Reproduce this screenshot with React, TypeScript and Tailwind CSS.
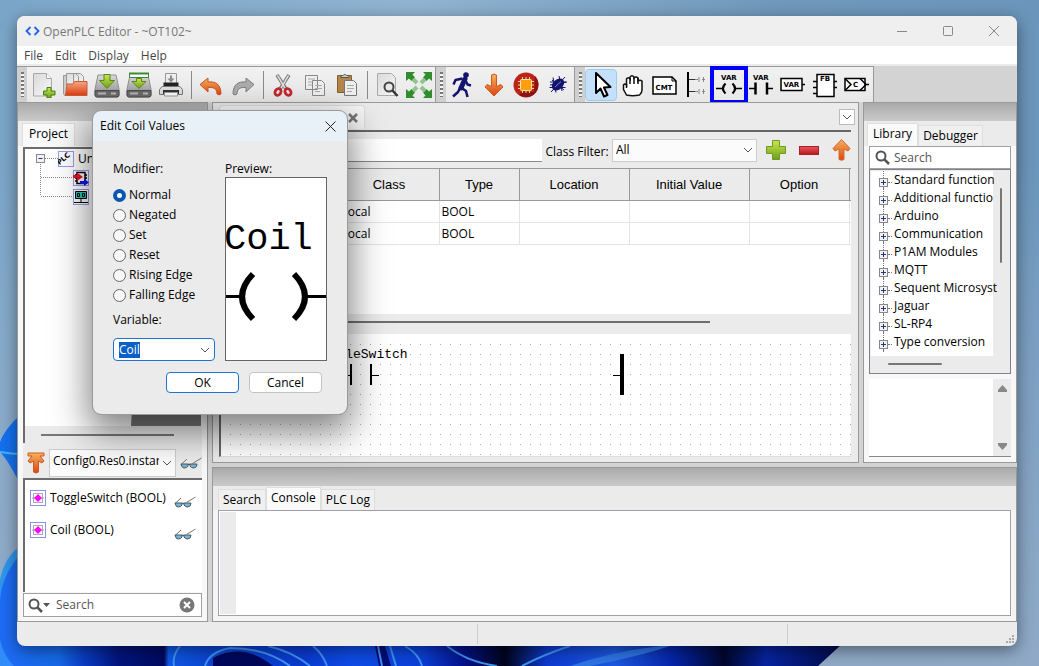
import { useEffect, useRef, useState, type ReactNode } from "react";

const Svg = ({ w, h, vb, children, className }: { w: number; h: number; vb?: string; children: ReactNode; className?: string }) => (
  <svg width={w} height={h} viewBox={vb ?? `0 0 ${w} ${h}`} className={className ?? "shrink-0"} fill="none" aria-hidden="true">
    {children}
  </svg>
);

const Defs = () => (
  <svg width="0" height="0" className="absolute" aria-hidden="true">
    <defs>
      <linearGradient id="orange" x1="0" y1="0" x2="0" y2="1">
        <stop offset="0" stopColor="#f6b35c" />
        <stop offset="1" stopColor="#dd4414" />
      </linearGradient>
      <linearGradient id="lime" x1="0" y1="0" x2="0" y2="1">
        <stop offset="0" stopColor="#c9e64c" />
        <stop offset="1" stopColor="#6f9f1c" />
      </linearGradient>
      <linearGradient id="steel" x1="0" y1="0" x2="0" y2="1">
        <stop offset="0" stopColor="#dadada" />
        <stop offset="1" stopColor="#8a8a8a" />
      </linearGradient>
      <linearGradient id="paper" x1="0" y1="0" x2="1" y2="1">
        <stop offset="0" stopColor="#d9d9d9" />
        <stop offset="1" stopColor="#f8f8f8" />
      </linearGradient>
      <linearGradient id="folder" x1="0" y1="0" x2="0" y2="1">
        <stop offset="0" stopColor="#f7a884" />
        <stop offset="1" stopColor="#d93c12" />
      </linearGradient>
      <linearGradient id="redbar" x1="0" y1="0" x2="0" y2="1">
        <stop offset="0" stopColor="#e8585a" />
        <stop offset="1" stopColor="#b81722" />
      </linearGradient>
    </defs>
  </svg>
);

const NewIcon = () => (
  <Svg w={26} h={26}>
    <path d="M3.5 1.5h13l5 5v17.500h-18z" fill="url(#paper)" stroke="#a8a8a8" />
    <path d="M16.500 1.500v5h5" fill="#fff" stroke="#a8a8a8" />
    <path d="M17 15.500h4v3.500h4v4h-4v3h-4v-3h-3.500v-4H17z" fill="url(#lime)" stroke="#3f7f12" />
  </Svg>
);
const OpenIcon = () => (
  <Svg w={26} h={26}>
    <path d="M1.500 3.500h5v20h-4l-1-2z" fill="#ccc" stroke="#999" />
    <path d="M4.500 1.500h9l3 3v8h-12zM11.500 1.500h7l3 3v8h-10z" fill="url(#paper)" stroke="#999" />
    <path d="M5 12h6l1.500-2.500H25V23.500H3.500z" fill="url(#folder)" stroke="#cc5a34" />
  </Svg>
);
const Drive = ({ banner }: { banner?: boolean }) => (
  <Svg w={26} h={26}>
    <path d="M4 3h18l3 14v6a2 2 0 0 1-2 2H3a2 2 0 0 1-2-2v-6z" fill="url(#steel)" stroke="#909090" />
    <path d="M1 18.500h24v4.500a2 2 0 0 1-2 2H3a2 2 0 0 1-2-2z" fill="#6a6a6a" stroke="#4c4c4c" />
    <path d="M4 21.500h8M17 21.500h5" stroke="#b5b5b5" strokeWidth="2" />
    {banner && <path d="M3.500 1.500h19v4h-19z" fill="#fff" stroke="#3e8a34" />}
    {banner && <path d="M3 1.500h20" stroke="#3e8a34" strokeWidth="2" />}
    <path d={banner ? "M10.500 6.500h5v3h4.500l-7 7-7-7h4.500z" : "M10 2.500h6v6h4.500L13 16.500 5.500 8.500H10z"} fill="url(#lime)" stroke="#568a16" />
  </Svg>
);
const PrintIcon = () => (
  <Svg w={26} h={26}>
    <path d="M7.500 1.500h11v10h-11z" fill="#eee" stroke="#999" />
    <path d="M12 3.500h2v3h2.500L13 10.500 9.500 6.500H12z" fill="#8a8a8a" />
    <path d="M5.500 10.500h15v5h-15z" fill="#222" />
    <path d="M4 14.500h18l2.500 3v5H1.500v-5z" fill="#ddd" stroke="#777" />
    <path d="M5 18h16v4H5z" fill="#333" />
    <path d="M6.500 20.500h13v3.500h-13z" fill="#f7f7f7" stroke="#999" />
  </Svg>
);
const UndoIcon = () => (
  <Svg w={26} h={26}>
    <path d="M2 12.500 10 6v4c8-1 13 3 13 12-1 1-3 1-4 0 0-5-3-7-9-6.500V20z" fill="url(#orange)" stroke="#c9561e" strokeLinejoin="round" />
  </Svg>
);
const RedoIcon = () => (
  <Svg w={26} h={26}>
    <path d="M24 12.500 16 6v4C8 9 3 13 3 22c1 1 3 1 4 0 0-5 3-7 9-6.500V20z" fill="#ababab" stroke="#7f7f7f" strokeLinejoin="round" />
  </Svg>
);
const CutIcon = () => (
  <Svg w={26} h={26}>
    <path d="M7 3 16 17M19 3 10 17" stroke="#777" strokeWidth="3.500" />
    <path d="M7.500 3.500 15 16M18.500 3.500 11 16" stroke="#ddd" strokeWidth="1.500" />
    <ellipse cx="8" cy="20" rx="2.800" ry="3.500" transform="rotate(35 8 20)" stroke="#c3282e" strokeWidth="2.800" />
    <ellipse cx="18" cy="20" rx="2.800" ry="3.500" transform="rotate(-35 18 20)" stroke="#c3282e" strokeWidth="2.800" />
  </Svg>
);
const CopyIcon = () => (
  <Svg w={26} h={26}>
    <path d="M3.500 3.500h12v14h-12zM10.500 8.500h9l3 3v12h-12z" fill="#efefef" stroke="#888" />
    <path d="M6 7h7M6 10h4M6 13h4M13 13.500h7M13 16.500h7M13 19.500h5" stroke="#aaa" />
  </Svg>
);
const PasteIcon = () => (
  <Svg w={26} h={26}>
    <path d="M3.500 3.500h14v17h-14z" fill="#b5864a" stroke="#82602f" />
    <path d="M7 5.500V3.500h2a2 2 0 0 1 3.500 0H15v2z" fill="#ccc" stroke="#555" />
    <path d="M10.500 8.500h9l3 3v12h-12z" fill="#efefef" stroke="#777" />
    <path d="M13 13.500h7M13 16.500h7M13 19.500h5" stroke="#aaa" />
  </Svg>
);
const PreviewIcon = () => (
  <Svg w={26} h={26}>
    <path d="M3.500 1.500h14l4 4v18h-18z" fill="url(#paper)" stroke="#aaa" />
    <circle cx="15" cy="15" r="4.500" fill="#e9e9e9" stroke="#444" strokeWidth="2" />
    <path d="m18.500 18.500 5 5.500" stroke="#333" strokeWidth="2.500" />
  </Svg>
);
const ExpandIcon = () => (
  <Svg w={26} h={26}>
    <g fill="#2f8d2c">
      <path d="M0 0h9L6.500 2.500l2.500 3-3.500 3.500L3 6.500 0 9z" />
      <path d="M26 0h-9l2.500 2.500-2.500 3 3.500 3.500L23 6.500 26 9z" />
      <path d="M0 26h9l-2.500-2.500 2.500-3L5.500 17 3 19.500 0 17z" />
      <path d="M26 26h-9l2.500-2.500-2.500-3 3.500-3.500 2.500 2.500L26 17z" />
    </g>
    <path d="m7 7 4 4M19 7l-4 4M7 19l4-4M19 19l-4-4" stroke="#93c48f" strokeWidth="4" />
  </Svg>
);
const RunIcon = () => (
  <Svg w={26} h={26}>
    <circle cx="17" cy="3" r="2.800" fill="#14146e" />
    <path d="M16 7 12 16" stroke="#14146e" strokeWidth="5" strokeLinecap="round" />
    <path d="M13.500 6.500 6.500 8 4.500 12.500M16 7.500 18.500 12.500 22 13.500M12 15.500l5 3.500 1.500 6M11 16 9 20 4 24.500" stroke="#14146e" strokeWidth="2.500" strokeLinejoin="round" />
  </Svg>
);
const DownArrow = () => (
  <Svg w={26} h={26}>
    <path d="M10.500 3q2.500-2 5 0v11.500l4.500-2 2 2.500-9 9-9-9 2-2.500 4.500 2z" fill="url(#orange)" stroke="#cf5a1c" strokeLinejoin="round" />
  </Svg>
);
const ChipIcon = () => (
  <Svg w={26} h={26}>
    <circle cx="13" cy="13" r="12.500" fill="#bd2418" />
    <path d="M22 4a12.500 12.500 0 0 1-16 19l3-3h12z" fill="#8e150f" />
    <path d="M9.500 5v16M13 5v16M16.500 5v16M5 9.500h16M5 13h16M5 16.500h16" stroke="#f1d0a0" />
    <rect x="7.500" y="7.500" width="11" height="11" rx="1" fill="#ff9f0f" stroke="#ffe2a8" />
  </Svg>
);
const BugIcon = () => (
  <Svg w={26} h={26}>
    <path d="M5 10h16M4.500 15.500h16M8 5.500l3 15M14 4l3 15M7 8l12 10M20 5 6 20M5 13l17-3" stroke="#14146e" />
    <ellipse cx="13" cy="12.500" rx="7" ry="5" transform="rotate(-42 13 12.500)" fill="#14146e" />
    <path d="m10 15 6-5.500" stroke="#7f82c8" />
  </Svg>
);
const CursorIcon = () => (
  <Svg w={26} h={26}>
    <path d="M8 1v20l4.500-4.500 3.500 8 3.500-1.500-3.500-7.500 6.500-.5z" fill="#fff" stroke="#000" strokeWidth="2" strokeLinejoin="round" />
  </Svg>
);
const HandIcon = () => (
  <Svg w={26} h={26}>
    <path d="M6.500 23 3.500 17.500V13q1.500-2 3 0V7q1.500-2.500 3.500 0V5q2-2.500 4 0v1q2-2 4 0v3q2-1.500 4 0v9q0 3-2.500 5-7 1.500-13 0z" fill="#fff" stroke="#111" strokeWidth="1.500" />
    <path d="M6.500 12v4M10 6v6M14 5v7M18 6v6" stroke="#111" strokeWidth="1.500" />
  </Svg>
);
const glyph = "font-['DejaVu_Sans'] font-bold";
const CmtIcon = () => (
  <Svg w={26} h={26}>
    <path d="M1 5h19l4 4v13H1z" fill="#fff" stroke="#000" strokeWidth="1.500" />
    <path d="M20 5v4h4" stroke="#000" />
    <text x="3.500" y="18" fontSize="7" fill="#000" className={glyph}>CMT</text>
  </Svg>
);
const RailIcon = () => (
  <Svg w={26} h={26}>
    <path d="M4 0v25" stroke="#000" strokeWidth="2" />
    <path d="M5 7.500h6M5 19.500h6" stroke="#333" />
    <path d="M11 7.500h3m4 0h3M11 19.500h3m4 0h3M15 5v5M19.500 5v5M15 17v5M19.500 17v5" stroke="#888" />
  </Svg>
);
const CoilIcon = () => (
  <Svg w={26} h={26}>
    <text x="5" y="8" fontSize="7" fill="#000" className={glyph}>VAR</text>
    <path d="M0 16.500h6M20 16.500h6" stroke="#000" strokeWidth="1.500" />
    <path d="M9.500 11.500q-5 5 0 10M16.500 11.500q5 5 0 10" stroke="#000" strokeWidth="2.200" />
  </Svg>
);
const ContactIcon = () => (
  <Svg w={26} h={26}>
    <text x="5" y="8" fontSize="7" fill="#000" className={glyph}>VAR</text>
    <path d="M1 16.500h6M19 16.500h6" stroke="#000" strokeWidth="1.500" />
    <path d="M7.500 10.500v12M19 10.500v12" stroke="#000" strokeWidth="2.500" />
  </Svg>
);
const VarIcon = () => (
  <Svg w={26} h={26}>
    <path d="M1 6.500h21v12H1z" fill="#fff" stroke="#000" strokeWidth="1.500" />
    <path d="M22 12.500h3" stroke="#000" strokeWidth="1.500" />
    <text x="3.500" y="15" fontSize="7" fill="#000" className={glyph}>VAR</text>
  </Svg>
);
const FbIcon = () => (
  <Svg w={26} h={26}>
    <path d="M5 2.500h17v22H5z" fill="#fff" stroke="#000" strokeWidth="1.500" />
    <path d="M1 9.500h4M1 15.500h4M1 21.500h4M22 9.500h3M22 15.500h3" stroke="#000" strokeWidth="1.500" />
    <text x="8" y="9" fontSize="7" fill="#000" className={glyph}>FB</text>
  </Svg>
);
const ConnIcon = () => (
  <Svg w={26} h={26}>
    <path d="M1 6.500h20v12H1z" fill="#fff" stroke="#000" strokeWidth="1.500" />
    <path d="m1 6.500 6 6-6 6M16 6.500l6 6-6 6M22 12.500h3" stroke="#000" strokeWidth="1.500" />
    <text x="9" y="15" fontSize="7" fill="#000" className={glyph}>C</text>
  </Svg>
);

const Chevron = () => (
  <Svg w={10} h={6}>
    <path d="m1 1 4 4 4-4" stroke="#555" />
  </Svg>
);
const Glasses = () => (
  <Svg w={22} h={12}>
    <path d="M1 7.500 7 2M12.500 6.500 21.500 1" stroke="#777" />
    <path d="M1 7h7v2q-1 2-4 2Q1.500 10.500 1 7zM10 7h7q0 3.500-3 4-3 0-4-2z" fill="#6cb8e2" stroke="#555" />
    <path d="M8 7.500q1-1 2 0" stroke="#444" />
  </Svg>
);
const Magnifier = () => (
  <Svg w={15} h={15}>
    <circle cx="6" cy="6" r="4.500" stroke="#555" strokeWidth="2" />
    <path d="m9.500 9.500 4.500 4.500" stroke="#555" strokeWidth="2.500" />
  </Svg>
);
const VarMark = () => (
  <Svg w={16} h={16}>
    <rect x=".5" y=".5" width="15" height="15" fill="#fff" stroke="#8f8fee" />
    <path d="M3.500 3v10M12.500 3v10M3 3.500h10M3 12.500h10M5 8H2m9 0h3" stroke="#aaa" />
    <path d="m8 4 4 4-4 4-4-4z" fill="#f0f" />
  </Svg>
);
const PlusBox = () => (
  <Svg w={9} h={9}>
    <rect x=".5" y=".5" width="8" height="8" fill="#f2f2f2" stroke="#888" />
    <path d="M4.500 2v5M2 4.500h5" stroke="#23357c" />
  </Svg>
);

function Wallpaper() {
  return (
    <svg className="absolute inset-0 h-full w-full" viewBox="0 0 1039 666" preserveAspectRatio="none" aria-hidden="true">
      <defs>
        <linearGradient id="sky" x1="0" y1="0" x2="1" y2="0">
          <stop offset="0" stopColor="#7ba5c8" />
          <stop offset=".4" stopColor="#90b4d1" />
          <stop offset=".75" stopColor="#7098bb" />
          <stop offset="1" stopColor="#6b95bb" />
        </linearGradient>
        <linearGradient id="haze" x1="0" y1="0" x2="0" y2="1">
          <stop offset=".25" stopColor="#a3b8d0" stopOpacity="0" />
          <stop offset="1" stopColor="#93abc8" stopOpacity=".9" />
        </linearGradient>
        <linearGradient id="bloom" x1="0" y1="0" x2="1" y2="0">
          <stop offset="0" stopColor="#1d6bf5" />
          <stop offset=".07" stopColor="#1668e6" />
          <stop offset=".1" stopColor="#0a3cc0" />
          <stop offset=".14" stopColor="#021580" />
          <stop offset=".195" stopColor="#010a60" />
          <stop offset=".2" stopColor="#0f58e4" />
          <stop offset=".25" stopColor="#0b45d0" />
          <stop offset=".36" stopColor="#0a3ad0" />
          <stop offset=".42" stopColor="#0e4ce6" />
          <stop offset=".5" stopColor="#0c40d8" />
          <stop offset=".55" stopColor="#04128c" />
          <stop offset=".6" stopColor="#01041c" />
          <stop offset=".65" stopColor="#0d3bd0" />
          <stop offset=".73" stopColor="#1c58e0" />
          <stop offset=".8" stopColor="#0524a8" />
          <stop offset=".86" stopColor="#01072e" />
          <stop offset=".91" stopColor="#0624a0" />
          <stop offset="1" stopColor="#030a48" />
        </linearGradient>
      </defs>
      <rect width="1039" height="666" fill="url(#sky)" />
      <rect width="1039" height="666" fill="url(#haze)" />
      <path d="M20 415Q4 430 0 442v10q8 8 20 32z" fill="#1470ee" />
      <path d="M0 452q12 2 20 2" stroke="#46b5f6" strokeWidth="2" fill="none" />
      <path d="M0 580q4-22 20-34v120H0z" fill="#2e96ea" />
      <path d="M20 555Q2 575 0 600v66h818l24-22H20z" fill="url(#bloom)" />
      <path d="M0 640q4 16 14 26H0z" fill="#2f8cf8" />
      <path d="M213 666v-8q30-16 60 8z" fill="#01085c" />
      <path d="M375 646h10l6 20h-12z" fill="#030d78" />
      <g fill="none" stroke="#3f93f3" strokeWidth="2">
        <path d="M180 646q-8 10-6 20M205 666q4-14 25-18 35 0 60 18M268 646q25 6 42 20M313 646q10 8 14 20M378 646l4 20M390 646l6 20M405 646q14 8 17 20M447 646q20 16 50 20M570 646q-25 8-48 20" />
      </g>
      <path d="M660 646q-50 6-90 20h20q50-10 80-20z" fill="#2e74e4" />
    </svg>
  );
}

function ToolButton({ label, children, active, marked }: { label: string; children: ReactNode; active?: boolean; marked?: boolean }) {
  const look = active ? "border border-[#99ccf2] bg-[#c4e0fb] rounded-sm" : marked ? "outline-4 -outline-offset-1 outline-[#0000ff]" : "";
  return (
    <button type="button" aria-label={label} className={`flex h-8 w-8 shrink-0 items-center justify-center ${look}`}>
      {children}
    </button>
  );
}

const Grip = () => (
  <div className="flex w-2.5 shrink-0 justify-center self-stretch bg-[#cfcfcf] py-[5px]">
    <div className="w-[3px] bg-[repeating-linear-gradient(180deg,#777_0_2px,#f4f4f4_2px_4px)]" />
  </div>
);
const Sep = () => (
  <div className="flex w-2 shrink-0 justify-center">
    <div className="h-7 w-px bg-[#8a8a8a]" />
  </div>
);
const groupClass = "flex items-center border-t border-r border-[#999] bg-gradient-to-b from-[#f1f1f1] to-[#e8e8e8]";

function Toolbar() {
  return (
    <div className="flex h-9 shrink-0 bg-[#d3d3d3]">
      <div className={groupClass}>
        <Grip />
        <ToolButton label="New"><NewIcon /></ToolButton>
        <ToolButton label="Open"><OpenIcon /></ToolButton>
        <ToolButton label="Save"><Drive /></ToolButton>
        <ToolButton label="Save As"><Drive banner /></ToolButton>
        <ToolButton label="Print"><PrintIcon /></ToolButton>
        <Sep />
        <ToolButton label="Undo"><UndoIcon /></ToolButton>
        <ToolButton label="Redo"><RedoIcon /></ToolButton>
        <Sep />
        <ToolButton label="Cut"><CutIcon /></ToolButton>
        <ToolButton label="Copy"><CopyIcon /></ToolButton>
        <ToolButton label="Paste"><PasteIcon /></ToolButton>
        <Sep />
        <ToolButton label="Search in Project"><PreviewIcon /></ToolButton>
        <ToolButton label="Full Screen"><ExpandIcon /></ToolButton>
      </div>
      <div className={groupClass}>
        <Grip />
        <ToolButton label="Simulate"><RunIcon /></ToolButton>
        <ToolButton label="Generate Program"><DownArrow /></ToolButton>
        <ToolButton label="Transfer"><ChipIcon /></ToolButton>
        <ToolButton label="Debug"><BugIcon /></ToolButton>
      </div>
      <div className={groupClass}>
        <Grip />
        <ToolButton label="Select" active><CursorIcon /></ToolButton>
        <ToolButton label="Move"><HandIcon /></ToolButton>
        <ToolButton label="Comment"><CmtIcon /></ToolButton>
        <ToolButton label="Power Rail"><RailIcon /></ToolButton>
        <ToolButton label="Coil" marked><CoilIcon /></ToolButton>
        <ToolButton label="Contact"><ContactIcon /></ToolButton>
        <ToolButton label="Variable"><VarIcon /></ToolButton>
        <ToolButton label="Block"><FbIcon /></ToolButton>
        <ToolButton label="Connection"><ConnIcon /></ToolButton>
      </div>
    </div>
  );
}

const PaneHeader = () => <div className="h-[18px] shrink-0 bg-gradient-to-b from-[#aaa] to-[#cacaca]" />;

function Tab({ children, active }: { children: ReactNode; active?: boolean }) {
  return (
    <button
      type="button"
      role="tab"
      aria-selected={!!active}
      className={`px-1 whitespace-nowrap border border-b-0 border-[#dedede] ${active ? "h-[23px] bg-[#fafafa] pb-0.5" : "h-[21px] bg-[#f0f0f0]"}`}
    >
      {children}
    </button>
  );
}

const watched = ["ToggleSwitch (BOOL)", "Coil (BOOL)"];

function ProjectPane() {
  return (
    <section className="row-span-2 flex min-w-0 flex-col border border-[#999] bg-[#ebebeb]">
      <PaneHeader />
      <div role="tablist" className="flex h-[25px] items-end pl-1">
        <Tab active><span className="px-0.5">Project</span></Tab>
      </div>
      <div className="flex flex-1 flex-col bg-[#f7f7f7] pt-px pr-[5px] pb-1 pl-[5px]">
        <div className="flex flex-1 flex-col border-t-2 border-l-2 border-[#6c6c6c] bg-white">
          <div className="relative flex-1 pl-[33px]">
            <Svg w={60} h={60} className="absolute top-px left-[10px]">
              <path d="M10 8.500h14M5.500 14v32M6 27.500h32M6 46.500h32" stroke="#888" strokeDasharray="1 1" />
              <rect x="1.500" y="4.500" width="8" height="8" fill="#f2f2f2" stroke="#888" />
              <path d="M3.500 8.500h4" stroke="#23357c" />
            </Svg>
            <div className="flex h-[19px] items-center gap-1">
              <Svg w={16} h={16}>
                <rect x=".5" y=".5" width="15" height="15" fill="#fff" stroke="#9a9aee" />
                <text x="1" y="13" fontSize="7" fill="#000" transform="rotate(-42 3 13)" className={glyph}>PLC</text>
              </Svg>
              <span>Un</span>
            </div>
            <div className="flex h-[19px] items-center pl-[15px]">
              <Svg w={16} h={16}>
                <rect x=".5" y=".5" width="15" height="15" fill="#fff" stroke="#9a9aee" />
                <path d="M4 2.500h8v11H4zM2 5h2m-2 3h2m-2 3h2m8-6h2m-2 3h2" stroke="#000" strokeWidth="1.500" />
                <path d="M0 5h4V2.500L10 7l-6 4V8H0z" fill="#e8112a" />
                <path d="M7 11h4V8.500L16 12.500 11 16v-2H7z" fill="#1414ee" />
              </Svg>
            </div>
            <div className="flex h-[19px] items-center pl-[15px]">
              <Svg w={16} h={16}>
                <rect x=".5" y=".5" width="15" height="15" fill="#fff" stroke="#9a9aee" />
                <path d="M2.500 2.500h11v7h-11z" fill="#2fc4be" stroke="#000" />
                <path d="M4.500 4.500h2v3h-2zM9.500 4.500h2v3h-2zM8 10v3M1 13.500h14" stroke="#000" />
              </Svg>
            </div>
            <Svg w={70} h={16} className="absolute right-px bottom-0">
              <path d="M1 0h69v16H0z" fill="#777" />
            </Svg>
          </div>
          <div className="flex h-[17px] shrink-0 items-center bg-[#ebebeb] px-4">
            <div className="h-0.5 w-[133px] bg-[#777]" />
          </div>
        </div>
        <div className="flex h-[35px] shrink-0 items-center gap-1 bg-[#ebebeb] pt-1 pl-1">
          <button type="button" aria-label="Parent instance" className="w-[18px]">
            <Svg w={18} h={22}>
              <path d="M1 1h16v3h-4l4 5-2 2-3.500-2v11q-2.500 2-5 0V9L3 11 1 9l4-5H1z" fill="url(#orange)" stroke="#cf5a1c" />
            </Svg>
          </button>
          <div className="relative flex h-7 min-w-0 flex-1 items-center">
            <select aria-label="Instance" className="h-full w-full appearance-none border border-[#ccc] bg-[#fbfbfb] pr-4 pb-1 pl-[3px]">
              <option>Config0.Res0.instance0</option>
            </select>
            <span className="pointer-events-none absolute right-1"><Chevron /></span>
          </div>
          <button type="button" aria-label="Watch instance" className="w-[22px]"><Glasses /></button>
        </div>
        <ul className="h-[114px] shrink-0 border-t-2 border-l-2 border-[#6c6c6c] bg-white pt-0.5 pr-1.5 pl-[5px]">
          {watched.map((name) => (
            <li key={name} className="flex h-8 items-center gap-1">
              <VarMark />
              <span className="flex-1 whitespace-nowrap">{name}</span>
              <button type="button" aria-label={`Watch ${name}`} className="mt-2 w-[22px] shrink-0"><Glasses /></button>
            </li>
          ))}
        </ul>
        <div className="mt-px flex h-6 shrink-0 items-center gap-1.5 border border-[#a0a0a0] bg-white pr-1.5 pl-1">
          <button type="button" aria-label="Search options" className="flex items-center">
            <Magnifier />
            <Svg w={7} h={4}><path d="M0 0h7L3.500 4z" fill="#555" /></Svg>
          </button>
          <input aria-label="Search project" placeholder="Search" className="min-w-0 flex-1 outline-none placeholder:text-[#555]" />
          <button type="button" aria-label="Clear">
            <Svg w={16} h={16}>
              <circle cx="8" cy="8" r="7.500" fill="#777" />
              <path d="m5 5 6 6M11 5l-6 6" stroke="#fff" strokeWidth="2" />
            </Svg>
          </button>
        </div>
      </div>
    </section>
  );
}

const columns = ["Class", "Type", "Location", "Initial Value", "Option"];
const rows = [
  ["Local", "BOOL", "", "", ""],
  ["Local", "BOOL", "", "", ""],
];

function EditorPane() {
  return (
    <section className="flex min-w-0 flex-col border border-[#999] bg-[#ebebeb] pr-[7px] pl-1.5">
      <div className="flex h-[27px] shrink-0 items-start justify-between">
        <div className="mt-0.5 flex h-6 w-[146px] items-center justify-end rounded-t border border-b-0 border-[#ddd] bg-[#f6f6f6] pr-1.5">
          <button type="button" aria-label="Close tab">
            <Svg w={10} h={10}><path d="m1 1 8 8M9 1 1 9" stroke="#777" strokeWidth="2.500" /></Svg>
          </button>
        </div>
        <button type="button" aria-label="List tabs" className="-mr-1 mt-1.5 flex h-4 w-4 items-center justify-center border border-[#bbb] bg-white">
          <Chevron />
        </button>
      </div>
      <div className="flex flex-1 flex-col border-t-2 border-[#666]">
        <div className="flex h-9 shrink-0 items-center">
          <input aria-label="Description" className="h-[23px] min-w-0 flex-1 border-b border-[#888] bg-white px-1" />
          <label htmlFor="class-filter" className="w-[70px] shrink-0 pt-1 text-center whitespace-nowrap">Class Filter:</label>
          <div className="relative flex h-[23px] w-[145px] shrink-0 items-center">
            <select id="class-filter" className="h-full w-full appearance-none border border-[#ccc] bg-[#fbfbfb] pl-[3px]">
              <option>All</option>
            </select>
            <span className="pointer-events-none absolute right-1"><Chevron /></span>
          </div>
          <div className="flex shrink-0 items-center gap-[13px] pl-[9px]">
            <button type="button" aria-label="Add variable">
              <Svg w={20} h={20}><path d="M6.500.500h7v6h6v7h-6v6h-7v-6h-6v-7h6z" fill="url(#lime)" stroke="#6b9a25" /></Svg>
            </button>
            <button type="button" aria-label="Remove variable">
              <Svg w={20} h={9}><rect x=".5" y=".5" width="19" height="8" fill="url(#redbar)" stroke="#a8202a" /></Svg>
            </button>
            <button type="button" aria-label="Move variable up">
              <Svg w={19} h={22}><path d="M7 20.500V10l-4 2-2-2.500L9.500.500 18 9.500 16 12l-4-2v10.500q-2.500 1.500-5 0z" fill="url(#orange)" stroke="#cf6a2c" /></Svg>
            </button>
          </div>
        </div>
        <div className="flex-1 bg-white">
          <table className="w-full table-fixed border-collapse">
            <colgroup>
              <col className="w-[120px]" />
              <col className="w-[100px]" />
              <col className="w-20" />
              <col className="w-[110px]" />
              <col className="w-[120px]" />
              <col className="w-[100px]" />
              <col />
            </colgroup>
            <thead>
              <tr className="h-8 border-y border-[#999] bg-[#ebebeb] font-['Liberation_Sans'] text-[13px]">
                <td className="border-r border-[#999]" />
                {columns.map((c) => (
                  <th key={c} scope="col" className="border-r border-[#999] font-normal">{c}</th>
                ))}
                <td />
              </tr>
            </thead>
            <tbody>
              {rows.map((r, n) => (
                <tr key={n} className="h-[22px] border-b border-[#e4e4e4]">
                  <td className="border-r border-[#e4e4e4]" />
                  {r.map((cell, i) => (
                    <td key={columns[i]} className="border-r border-[#e4e4e4] px-0.5">{cell}</td>
                  ))}
                  <td />
                </tr>
              ))}
            </tbody>
          </table>
        </div>
        <div className="h-5 shrink-0 pt-[7px]">
          <div className="h-0.5 w-[491px] bg-[#6e6e6e]" />
        </div>
        <div className="mb-[5px] h-[123px] shrink-0 border-b border-l-2 border-[#dedede] border-l-[#666] bg-white">
          <svg width="100%" height="122" aria-label="Ladder diagram">
            <defs>
              <pattern id="dots" x="9" y="10" width="10" height="10" patternUnits="userSpaceOnUse">
                <rect width="1" height="1" fill="#aaa" />
              </pattern>
            </defs>
            <rect y="5" width="100%" height="117" fill="url(#dots)" />
            <text x="93" y="24" fontSize="13" fill="#000" className="font-['Liberation_Mono',monospace]">ToggleSwitch</text>
            <path d="M120 41.500h9M151 41.500h7M392 41.500h8" stroke="#000" />
            <path d="M130 30v21M150 30v21" stroke="#000" strokeWidth="2" />
            <path d="M401 20v41" stroke="#000" strokeWidth="4" />
          </svg>
        </div>
      </div>
    </section>
  );
}

const library = ["Standard function", "Additional functio", "Arduino", "Communication", "P1AM Modules", "MQTT", "Sequent Microsyst", "Jaguar", "SL-RP4", "Type conversion"];

function LibraryPane() {
  return (
    <section className="flex min-w-0 flex-col border border-[#999] bg-[#ebebeb]">
      <PaneHeader />
      <div role="tablist" className="flex h-[25px] items-end pl-[3px]">
        <Tab active><span className="px-px">Library</span></Tab>
        <Tab>Debugger</Tab>
      </div>
      <div className="flex flex-1 flex-col bg-[#f7f7f7] pr-[5px] pb-[5px] pl-[5px]">
        <label className="flex h-[23px] shrink-0 items-center gap-1 border border-[#a0a0a0] bg-white pl-[5px]">
          <Magnifier />
          <input aria-label="Search library" placeholder="Search" className="min-w-0 flex-1 outline-none placeholder:text-[#555]" />
        </label>
        <div className="flex h-[205px] shrink-0 flex-col border border-[#7e8290] bg-[#ebebeb] p-px">
          <div className="flex h-[185px] shrink-0">
            <ul className="min-w-0 flex-1 bg-white pl-2">
              {library.map((name) => (
                <li key={name} className="flex h-[18px] items-center">
                  <div className="flex h-full w-[9px] shrink-0 flex-col items-center">
                    <div className="h-[7px] border-l border-dotted border-[#777]" />
                    <PlusBox />
                    <div className="flex-1 border-l border-dotted border-[#777]" />
                  </div>
                  <div className="mt-1 w-1 shrink-0 border-t border-dotted border-[#777]" />
                  <span className="pl-0.5 whitespace-nowrap">{name}</span>
                </li>
              ))}
            </ul>
            <div className="flex w-4 shrink-0 justify-center pt-[17px]">
              <div className="h-[75px] w-0.5 rounded bg-[#777]" />
            </div>
          </div>
          <div className="flex flex-1 items-center pl-[17px]">
            <div className="h-0.5 w-[54px] rounded bg-[#777]" />
          </div>
        </div>
        <div className="mt-[5px] flex min-h-0 flex-1 border-b border-[#888] bg-white">
          <div className="flex-1" />
          <div className="flex w-[18px] flex-col items-center justify-between bg-[#ebebeb] py-1.5">
            <Svg w={9} h={7}><path d="M4.500 0 9 5v2H0V5z" fill="#888" /></Svg>
            <Svg w={9} h={7}><path d="M4.500 7 9 2V0H0v2z" fill="#888" /></Svg>
          </div>
        </div>
      </div>
    </section>
  );
}

function ConsolePane() {
  return (
    <section className="col-span-2 flex h-[155px] min-w-0 flex-col border border-[#999] bg-[#ebebeb]">
      <PaneHeader />
      <div role="tablist" className="flex h-6 items-end pl-[5px]">
        <Tab>Search</Tab>
        <Tab active>Console</Tab>
        <Tab>PLC Log</Tab>
      </div>
      <div className="flex flex-1 bg-[#f4f4f4] px-[5px] pb-[5px]">
        <div className="flex flex-1 border border-[#a0a0a8] bg-white p-px">
          <div className="w-4 bg-[#ebebeb]" />
          <textarea readOnly aria-label="Console output" className="flex-1 resize-none outline-none" />
        </div>
      </div>
    </section>
  );
}

const modifiers = ["Normal", "Negated", "Set", "Reset", "Rising Edge", "Falling Edge"];

function CoilDialog() {
  const [modifier, setModifier] = useState("Normal");
  const field = useRef<HTMLInputElement>(null);
  useEffect(() => {
    field.current?.focus();
    field.current?.select();
  }, []);
  return (
    <div role="dialog" aria-labelledby="dialog-title" className="absolute top-[111px] left-[93px] w-[254px] overflow-hidden rounded-lg bg-[#ebebeb] pb-[21px] shadow-[0_14px_36px_4px_rgba(0,0,0,0.5)] outline outline-[#9a9a9a]">
      <div className="flex h-[30px] items-center justify-between bg-[#e8f0f8] pr-[11px] pl-[7px]">
        <h2 id="dialog-title">Edit Coil Values</h2>
        <button type="button" aria-label="Close">
          <Svg w={11} h={11}><path d="m.5.500 10 10M10.500.500l-10 10" stroke="#222" /></Svg>
        </button>
      </div>
      <div className="flex gap-2.5 px-5 pt-[18px]">
        <div className="flex w-[102px] flex-col">
          <fieldset>
            <legend className="mb-1.5 h-5 leading-5">Modifier:</legend>
            {modifiers.map((m) => (
              <label key={m} className="flex h-5 items-center gap-[3px] whitespace-nowrap">
                <input
                  type="radio"
                  name="modifier"
                  checked={modifier === m}
                  onChange={() => setModifier(m)}
                  className="h-[13px] w-[13px] appearance-none rounded-full border border-[#666] bg-[#f7f7f7] checked:border-4 checked:border-[#0a56b0] checked:bg-white"
                />
                {m}
              </label>
            ))}
          </fieldset>
          <label htmlFor="coil-variable" className="mt-[5px] mb-2 h-5 leading-5">Variable:</label>
          <div className="flex h-[23px] items-center rounded-sm border border-[#1d74d0] bg-white pr-1 pl-[5px]">
            <input id="coil-variable" ref={field} defaultValue="Coil" className="min-w-0 flex-1 outline-none selection:bg-[#0a5fc8] selection:text-white" />
            <button type="button" aria-label="Show variables"><Chevron /></button>
          </div>
        </div>
        <div className="flex w-[102px] flex-col">
          <span className="h-[18px] leading-5">Preview:</span>
          <div className="flex-1 border border-[#666] bg-white">
            <svg width="100" height="182" viewBox="0 0 100 182" fill="none" aria-label="Coil preview">
              <text x="-2" y="71" fontSize="37" fill="#000" className="font-['Liberation_Mono',monospace]">Coil</text>
              <path d="M0 118.500h14M81 118.500h19" stroke="#000" strokeWidth="3" />
              <path d="M27 96Q5 118.500 27 141M68 96q22 22.500 0 45" stroke="#000" strokeWidth="6" />
            </svg>
          </div>
        </div>
      </div>
      <div className="mt-[11px] flex justify-end gap-2.5 pr-[25px]">
        <button type="button" className="h-[21px] w-[73px] rounded border border-[#1d74d0] bg-white">OK</button>
        <button type="button" className="h-[21px] w-[73px] rounded border border-[#c4c4c4] bg-white">Cancel</button>
      </div>
    </div>
  );
}

export default function App() {
  return (
    <div className="relative flex min-h-screen overflow-hidden pt-4 pr-[22px] pb-5 pl-[17px] font-['Open_Sans','Noto_Sans',sans-serif] text-[12px] leading-4 text-black">
      <Defs />
      <Wallpaper />
      <main className="relative flex min-w-0 flex-1 flex-col overflow-hidden rounded-lg bg-[#ebebeb] shadow-[0_4px_16px_rgba(0,0,0,0.45)]">
        <header className="flex h-[30px] shrink-0 items-center gap-[3px] bg-[#efefef] px-2 text-[#777]">
          <Svg w={15} h={10}><path d="M5.500 1 1.500 5l4 4M9.500 1l4 4-4 4" stroke="#1f62f5" strokeWidth="1.800" /></Svg>
          <h1 className="flex-1 pt-px">OpenPLC Editor - ~OT102~</h1>
          <div className="flex items-center gap-9 pr-2.5">
            <button type="button" aria-label="Minimize"><Svg w={10} h={10}><path d="M0 5.500h10" stroke="#888" /></Svg></button>
            <button type="button" aria-label="Maximize"><Svg w={10} h={10}><rect x=".5" y=".5" width="9" height="9" rx="1" stroke="#888" /></Svg></button>
            <button type="button" aria-label="Close"><Svg w={10} h={10}><path d="m0 0 10 10M10 0 0 10" stroke="#888" /></Svg></button>
          </div>
        </header>
        <nav className="flex h-5 shrink-0 items-end gap-3 border-b-2 border-[#ebebeb] bg-white px-[7px] text-[#444]">
          {["File", "Edit", "Display", "Help"].map((m) => (
            <button key={m} type="button">{m}</button>
          ))}
        </nav>
        <Toolbar />
        <div className="grid flex-1 grid-cols-[191px_minmax(0,1fr)_154px] grid-rows-[1fr_auto] gap-1 bg-[#d3d3d3]">
          <ProjectPane />
          <EditorPane />
          <LibraryPane />
          <ConsolePane />
        </div>
        <footer className="grid h-6 shrink-0 grid-cols-[461fr_310fr_229fr] py-0.5">
          <div className="border-r border-[#ccc]" />
          <div className="border-r border-[#ccc]" />
          <div className="flex items-end justify-end pr-0.5">
            <Svg w={9} h={9}><path d="M6 0h2v2H6zM6 3h2v2H6zM3 3h2v2H3zM6 6h2v2H6zM3 6h2v2H3zM0 6h2v2H0z" fill="#aaa" /></Svg>
          </div>
        </footer>
      </main>
      <CoilDialog />
    </div>
  );
}
